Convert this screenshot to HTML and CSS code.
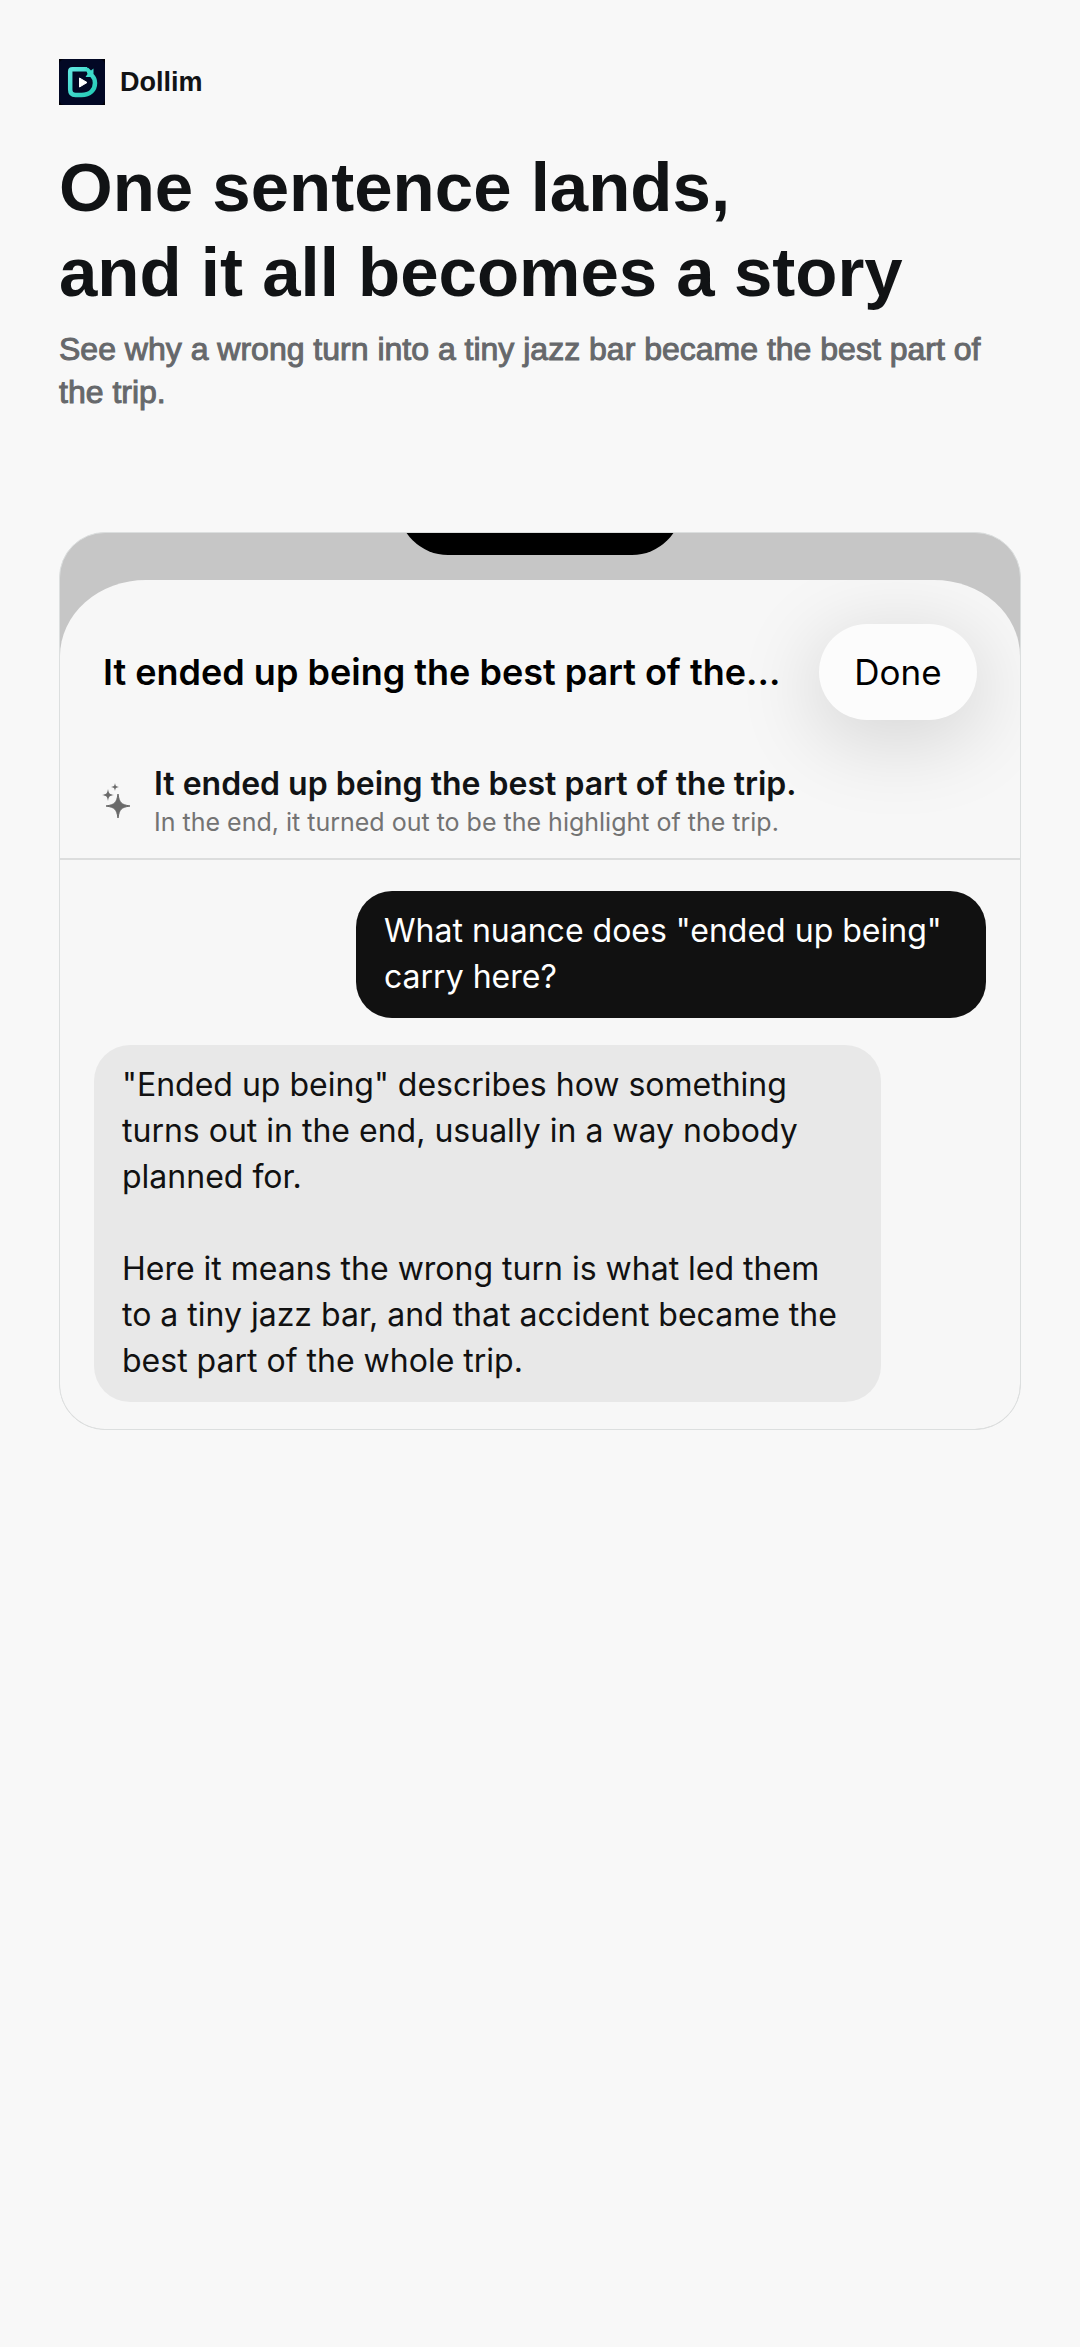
FILE: index.html
```html
<!DOCTYPE html>
<html lang="en">
<head>
	<meta charset="UTF-8">
	<meta name="viewport" content="width=device-width, initial-scale=1">
	<title>Dollim</title>
	<link rel="stylesheet" href="styles.css">
</head>
<body>
	<main class="page">
		<div class="brand">
			<svg class="brand_logo" viewBox="0 0 46 46" aria-hidden="true">
				<defs>
					<linearGradient id="mint" x1="0" y1="0" x2="1" y2="1">
						<stop offset="0" stop-color="#5fe6e0"/>
						<stop offset="1" stop-color="#22c9b4"/>
					</linearGradient>
				</defs>
				<rect width="46" height="46" fill="#000008"/>
				<rect width="46" height="46" rx="6" fill="#020825"/>
				<path d="M28 10.300H13.500Q11.200 10.300 11.200 12.500V30.500Q11.200 36 16.500 36H22.500C31 36 36 31 36 24C36 20.500 35 18.500 33 16.500" fill="none" stroke="url(#mint)" stroke-width="4.500"/>
				<path d="M26 8.050Q30 8.500 32 11.500L34.500 9.500V18H26.500L28.500 15Z" fill="#3ddccb"/>
				<path d="M20.500 19V28L28 23.500Z" fill="#fff" stroke="#fff" stroke-linejoin="round"/>
			</svg>
			<span class="brand_name">Dollim</span>
		</div>
		<h1 class="headline">One sentence lands,<br>and it all becomes a story</h1>
		<p class="intro">See why a wrong turn into a tiny jazz bar became the best part of the trip.</p>

		<section class="phone">
			<div class="notch"></div>
			<div class="sheet">
				<header class="sheet_head">
					<h2 class="sheet_title">It ended up being the best part of the...</h2>
					<button class="done" type="button">Done</button>
				</header>
				<div class="quote">
					<svg class="quote_icon" viewBox="0 0 30 36" aria-hidden="true">
						<path d="M17 11C18.500 20 20 21.500 29 23C20 24.500 18.500 26 17 35C15.500 26 14 24.500 5 23C14 21.500 15.500 20 17 11Z" stroke="#6a6a6a" stroke-linejoin="round"/>
						<path d="M7 6C7.800 10.500 8.500 11.200 13 12C8.500 12.800 7.800 13.500 7 18C6.200 13.500 5.500 12.800 1 12C5.500 11.200 6.200 10.500 7 6Z"/>
						<path d="M14 0C14.500 3 15 3.500 18 4C15 4.500 14.500 5 14 8C13.500 5 13 4.500 10 4C13 3.500 13.500 3 14 0Z"/>
					</svg>
					<div>
						<p class="quote_line">It ended up being the best part of the trip.</p>
						<p class="quote_gloss">In the end, it turned out to be the highlight of the trip.</p>
					</div>
				</div>
				<div class="chat">
					<p class="bubble bubble_me">What nuance does "ended up being" carry here?</p>
					<div class="bubble bubble_reply">
						<p>"Ended up being" describes how something turns out in the end, usually in a way nobody planned for.</p>
						<p>Here it means the wrong turn is what led them to a tiny jazz bar, and that accident became the best part of the whole trip.</p>
					</div>
				</div>
			</div>
		</section>
	</main>
</body>
</html>
```
FILE: styles.css
```css
* {
	box-sizing: border-box;
}
body {
	margin: 0;
	background: #f8f8f8;
	color: #111315;
	font-family: "Liberation Sans", Arial, sans-serif;
}
h1, h2, p {
	margin: 0;
}
.page {
	padding: 59px;
}
.brand {
	display: flex;
	align-items: center;
	gap: 15px;
}
.brand_logo {
	width: 46px;
	height: 46px;
}
.brand_name {
	font-size: 27px;
	font-weight: bold;
}
.headline {
	margin-top: 40px;
	font-size: 69px;
	line-height: 85px;
}
.intro {
	margin-top: 13px;
	font-size: 32px;
	line-height: 43px;
	color: #66686b;
	-webkit-text-stroke: 1px #66686b;
}

/* phone card */
.phone {
	position: relative;
	margin-top: 118px;
	padding-top: 47px;
	overflow: hidden;
	border: 1px solid #dcdfdf;
	border-radius: 46px;
	background: #c6c6c6;
	font-family: Inter, sans-serif;
}
.notch {
	position: absolute;
	top: -78px;
	left: 50%;
	width: 284px;
	height: 100px;
	margin-left: -142px;
	border-radius: 50px;
	background: #000;
}
.sheet {
	overflow: hidden;
	border-radius: 86px 86px 0 0 / 76px 76px 0 0;
	background: #f7f7f7;
}
.sheet_head {
	display: flex;
	align-items: center;
	justify-content: space-between;
	padding: 44px 43px 43px;
}
.sheet_title {
	font-size: 36px;
	font-weight: 600;
	color: #000;
	white-space: nowrap;
}
.done {
	width: 158px;
	height: 96px;
	padding: 0;
	border: 0;
	border-radius: 48px;
	background: #fcfcfc;
	box-shadow: 0 16px 80px 8px rgba(0, 0, 0, 0.13);
	color: #000;
	font-family: inherit;
	font-size: 35px;
}
.quote {
	display: flex;
	align-items: center;
	gap: 23px;
	padding: 0 41px 19px;
	border-bottom: 2px solid #dcdddd;
}
.quote_icon {
	width: 30px;
	height: 36px;
	fill: #6a6a6a;
}
.quote_line {
	font-size: 32px;
	line-height: 42px;
	font-weight: 600;
}
.quote_gloss {
	font-size: 25px;
	line-height: 34px;
	color: #737373;
}
.chat {
	display: flex;
	flex-direction: column;
	gap: 27px;
	padding: 31px 34px 27px;
}
.bubble {
	padding: 17px 28px 18px;
	border-radius: 36px;
	font-size: 32px;
	line-height: 46px;
}
.bubble_me {
	align-self: flex-end;
	max-width: 630px;
	background: #111;
	color: #fff;
}
.bubble_reply {
	align-self: flex-start;
	max-width: 787px;
	background: #e8e8e8;
	color: #111;
}
.bubble_reply p + p {
	margin-top: 46px;
}
```
